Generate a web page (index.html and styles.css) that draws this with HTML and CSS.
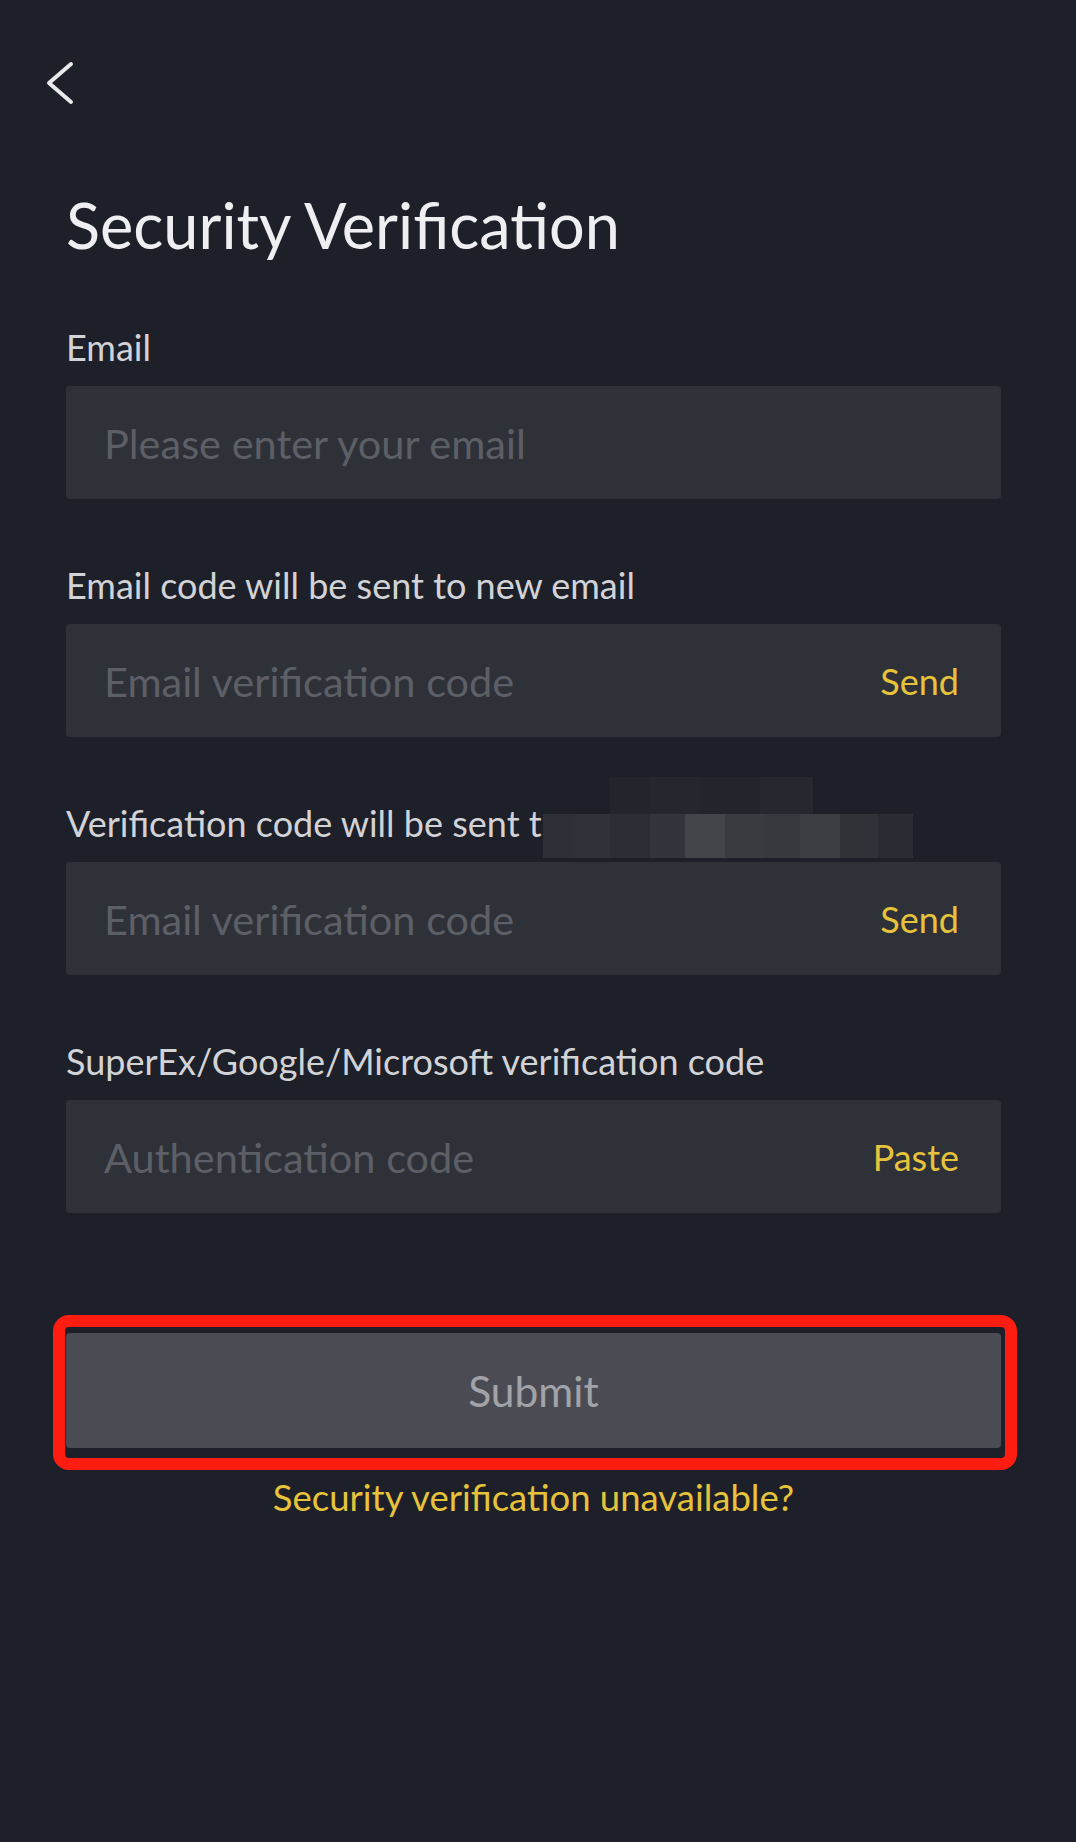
FILE: index.html
```html
<!DOCTYPE html>
<html lang="en">
<head>
<meta charset="utf-8">
<title>Security Verification</title>
<link rel="stylesheet" href="styles.css">
</head>
<body>
<main class="page">
  <header class="topbar">
    <button class="back" type="button" aria-label="Back">
      <svg width="30" height="44" viewBox="0 0 30 44" fill="none" stroke="#e9e9ec" stroke-width="4" stroke-linecap="round" stroke-linejoin="round"><path d="M26 3 L4 22 L26 41"/></svg>
    </button>
  </header>

  <section class="content">
    <h1 class="title">Security Verification</h1>

    <form class="form">
      <div class="field">
        <label class="label">Email</label>
        <div class="input"><input type="text" placeholder="Please enter your email"></div>
      </div>
      <div class="field">
        <label class="label">Email code will be sent to new email</label>
        <div class="input"><input type="text" placeholder="Email verification code"><span class="action">Send</span></div>
      </div>
      <div class="field">
        <label class="label">Verification code will be sent t</label>
        <div class="mosaic mosaic-top"></div>
        <div class="mosaic mosaic-bottom"></div>
        <div class="input"><input type="text" placeholder="Email verification code"><span class="action">Send</span></div>
      </div>
      <div class="field">
        <label class="label">SuperEx/Google/Microsoft verification code</label>
        <div class="input"><input type="text" placeholder="Authentication code"><span class="action">Paste</span></div>
      </div>
    </form>

    <div class="submit-wrap">
      <button class="submit" type="button">Submit</button>
    </div>
    <a class="help" href="#">Security verification unavailable?</a>
  </section>
</main>
</body>
</html>
```

FILE: styles.css
```css
* { box-sizing: border-box; }

html, body {
  margin: 0;
  padding: 0;
  background: #1e2029;
}

body {
  font-family: Lato, "Noto Sans", sans-serif;
  color: #cfd0d4;
  min-height: 1842px;
}

.page {
  display: flex;
  flex-direction: column;
}

.topbar {
  padding: 61px 0 0 45px;
  height: 105px;
}

.back {
  display: block;
  width: 30px;
  height: 44px;
  padding: 0;
  border: 0;
  background: none;
}

.back svg { display: block; }

.content {
  display: flex;
  flex-direction: column;
  padding: 0 75px 0 66px;
}

.title {
  margin: 82px 0 0 0;
  font-size: 63px;
  line-height: 76px;
  font-weight: 400;
  color: #efeff1;
}

.form {
  display: flex;
  flex-direction: column;
  gap: 64px;
  margin-top: 62px;
}

.field {
  position: relative;
  display: flex;
  flex-direction: column;
  gap: 17px;
}

.label {
  font-size: 36px;
  line-height: 44px;
  color: #d2d3d7;
}

.input {
  display: flex;
  align-items: center;
  height: 113px;
  padding: 0 42px 0 38px;
  background: #2f3139;
  border-radius: 4px;
}

.input input {
  flex: 1;
  min-width: 0;
  border: 0;
  outline: none;
  background: transparent;
  padding: 0;
  font-family: inherit;
  font-size: 41.5px;
  color: #d2d3d7;
}

.input input::placeholder { color: #5d5f66; }

.action {
  font-size: 36px;
  color: #e6c33b;
}

.mosaic {
  position: absolute;
}

.mosaic-top {
  left: 544px;
  top: -24px;
  width: 203px;
  height: 37px;
  background: linear-gradient(90deg,
    #23252c 0 40px, #26272e 40px 90px, #24252c 90px 150px, #27282f 150px 203px);
}

.mosaic-bottom {
  left: 477px;
  top: 13px;
  width: 370px;
  height: 44px;
  background: linear-gradient(90deg,
    #2f3037 0 32px, #303139 32px 67px, #2d2e35 67px 107px, #34353c 107px 142px,
    #44454a 142px 182px, #3a3b41 182px 222px, #37383e 222px 257px,
    #3d3e44 257px 297px, #313238 297px 335px, #2b2c33 335px 370px);
}

.submit-wrap {
  position: relative;
  margin-top: 120px;
}

.submit-wrap::after {
  content: "";
  position: absolute;
  top: -18px;
  left: -13px;
  right: -16px;
  bottom: -22px;
  border: 12px solid #ff1d12;
  border-radius: 16px;
  pointer-events: none;
}

.submit {
  display: block;
  width: 100%;
  height: 115px;
  border: 0;
  border-radius: 4px;
  background: #4b4c53;
  font-family: inherit;
  font-size: 42.5px;
  color: #a2a3a8;
}

.help {
  align-self: center;
  margin-top: 27px;
  font-size: 36.5px;
  line-height: 44px;
  color: #e6c33b;
  text-decoration: none;
}
```
